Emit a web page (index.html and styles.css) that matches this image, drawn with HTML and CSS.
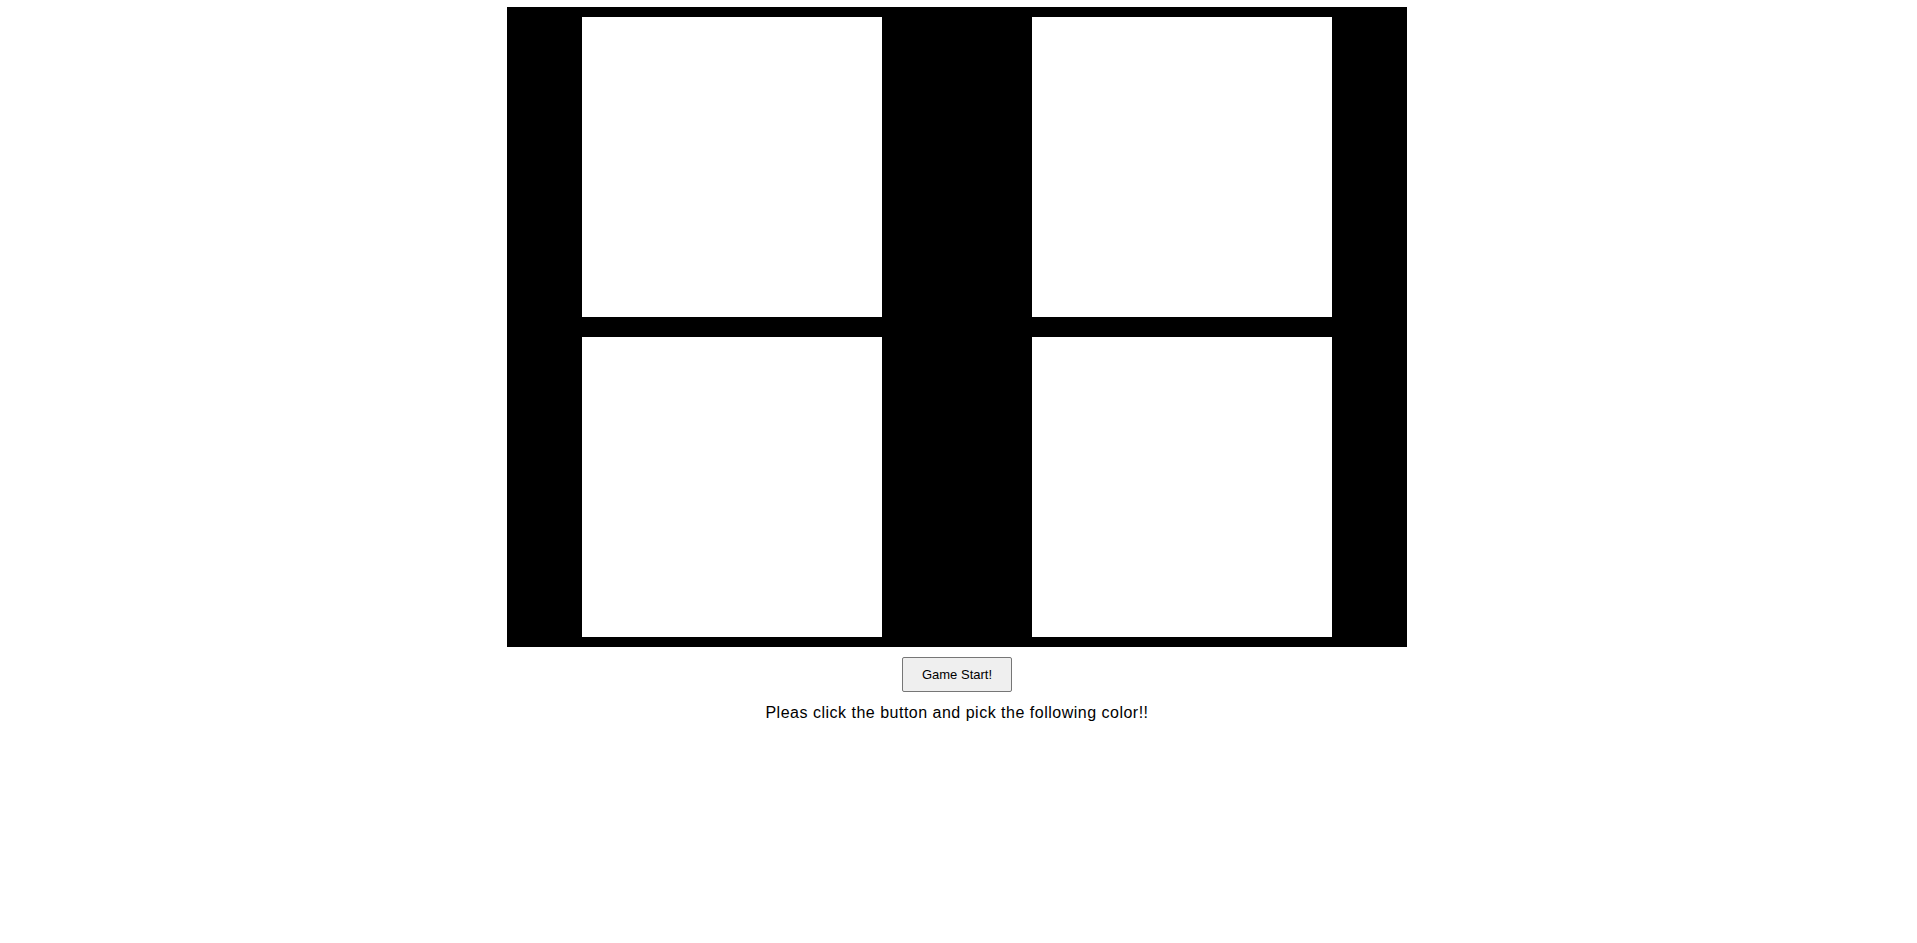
FILE: index.html
```html
<!DOCTYPE html>
<html lang="en">
<head>
    <meta charset="UTF-8">
    <meta name="viewport" content="width=device-width, initial-scale=1.0">
    <title>Color Game</title>
    <link rel="stylesheet" href="styles.css">
</head>
<body>
    <div class="board">
        <div class="cell"></div>
        <div class="cell"></div>
        <div class="cell"></div>
        <div class="cell"></div>
    </div>
    <div class="controls">
        <button class="start-btn" type="button">Game Start!</button>
    </div>
    <p class="message">Pleas click the button and pick the following color!!</p>
</body>
</html>
```

FILE: styles.css
```css
body {
    margin: 0;
    padding: 7px 3px 0 0;
    font-family: "Liberation Sans", Arial, sans-serif;
    background-color: #fff;
}

.board {
    width: 900px;
    height: 640px;
    margin: 0 auto;
    background-color: #000;
    display: grid;
    grid-template-columns: 1fr 1fr;
}

.cell {
    width: 300px;
    height: 300px;
    margin: 10px 75px;
    background-color: #fff;
}

.controls {
    display: flex;
    justify-content: center;
    margin-top: 10px;
}

.start-btn {
    width: 110px;
    height: 35px;
    font-family: "Liberation Sans", Arial, sans-serif;
    font-size: 13px;
    color: #000;
    background-color: #efefef;
    border: 1px solid #767676;
    border-radius: 2px;
}

.message {
    margin: 11px 0 0;
    text-align: center;
    font-size: 16px;
    line-height: 20px;
    letter-spacing: 0.5px;
}
```
